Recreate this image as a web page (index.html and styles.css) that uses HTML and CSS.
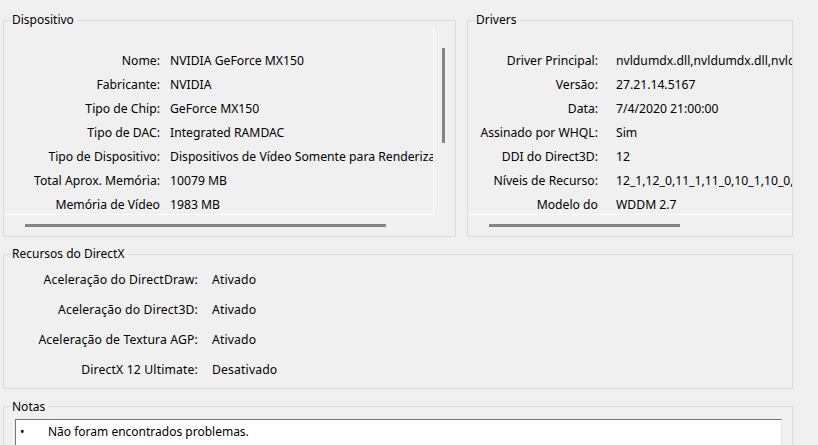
FILE: index.html
```html
<!DOCTYPE html>
<html lang="pt-BR">
<head>
<meta charset="utf-8">
<title>Ferramenta de Diagnóstico do DirectX - Exibir</title>
<link rel="stylesheet" href="styles.css">
</head>
<body>
<div class="page">
  <div class="top">
    <fieldset class="group">
      <legend>Dispositivo</legend>
      <div class="scroller">
        <div class="scroll-main">
          <div class="viewport viewport-device">
            <div class="kv kv-device">
              <span class="k">Nome:</span><span class="v">NVIDIA GeForce MX150</span>
              <span class="k">Fabricante:</span><span class="v">NVIDIA</span>
              <span class="k">Tipo de Chip:</span><span class="v">GeForce MX150</span>
              <span class="k">Tipo de DAC:</span><span class="v">Integrated RAMDAC</span>
              <span class="k">Tipo de Dispositivo:</span><span class="v">Dispositivos de Vídeo Somente para Renderização</span>
              <span class="k">Total Aprox. Memória:</span><span class="v">10079 MB</span>
              <span class="k">Memória de Vídeo</span><span class="v">1983 MB</span>
            </div>
          </div>
          <div class="vscroll"><div class="vthumb"></div></div>
        </div>
        <div class="hscroll"><div class="hthumb hthumb-device"></div></div>
      </div>
    </fieldset>

    <fieldset class="group">
      <legend>Drivers</legend>
      <div class="scroller">
        <div class="scroll-main">
          <div class="viewport viewport-drivers">
            <div class="kv kv-drivers">
              <span class="k">Driver Principal:</span><span class="v">nvldumdx.dll,nvldumdx.dll,nvldumdx.dll,nvldumdx.dll</span>
              <span class="k">Versão:</span><span class="v">27.21.14.5167</span>
              <span class="k">Data:</span><span class="v">7/4/2020 21:00:00</span>
              <span class="k">Assinado por WHQL:</span><span class="v">Sim</span>
              <span class="k">DDI do Direct3D:</span><span class="v">12</span>
              <span class="k">Níveis de Recurso:</span><span class="v">12_1,12_0,11_1,11_0,10_1,10_0,9_3,9_2,9_1</span>
              <span class="k">Modelo do</span><span class="v">WDDM 2.7</span>
            </div>
          </div>
        </div>
        <div class="hscroll"><div class="hthumb hthumb-drivers"></div></div>
      </div>
    </fieldset>
  </div>

  <fieldset class="group group-features">
    <legend>Recursos do DirectX</legend>
    <div class="kv kv-features">
      <span class="k">Aceleração do DirectDraw:</span><span class="v">Ativado</span>
      <span class="k">Aceleração do Direct3D:</span><span class="v">Ativado</span>
      <span class="k">Aceleração de Textura AGP:</span><span class="v">Ativado</span>
      <span class="k">DirectX 12 Ultimate:</span><span class="v">Desativado</span>
    </div>
  </fieldset>

  <fieldset class="group group-notes">
    <legend>Notas</legend>
    <div class="notes-box">
      <ul class="notes-list">
        <li><span class="bullet">•</span><span>Não foram encontrados problemas.</span></li>
      </ul>
    </div>
  </fieldset>
</div>
</body>
</html>
```

FILE: styles.css
```css
html, body {
  margin: 0;
  padding: 0;
  background: #f0f0f0;
  overflow: hidden;
}

body {
  font-family: "Noto Sans", "Open Sans", sans-serif;
  font-size: 12px;
  color: #000;
}

.page {
  width: 790px;
  padding: 12px 0 0 3px;
  display: flex;
  flex-direction: column;
}

.top {
  display: grid;
  grid-template-columns: 453px 326px;
  column-gap: 11px;
}

.group {
  margin: 0;
  padding: 0;
  border: 1px solid #dcdcdc;
  min-width: 0;
}

.group legend {
  margin-left: 7px;
  padding: 0 3px 0 1px;
  line-height: 16px;
  white-space: nowrap;
}

.scroller {
  display: flex;
  flex-direction: column;
}

.scroll-main {
  display: flex;
  height: 187px;
}

.viewport {
  flex: 1;
  min-width: 0;
  overflow: hidden;
  padding-top: 20px;
  border-bottom: 1px solid #fdfdfd;
}

.viewport-device {
  border-right: 1px solid #fdfdfd;
}

.vscroll {
  width: 21px;
  flex: none;
}

.vthumb {
  margin: 20px 0 0 8px;
  width: 3px;
  height: 95px;
  background: #858585;
}

.hscroll {
  height: 21px;
}

.hthumb {
  margin: 9px 0 0 21px;
  height: 3px;
  background: #858585;
}

.hthumb-device {
  width: 361px;
}

.hthumb-drivers {
  width: 191px;
}

.kv {
  display: grid;
  align-items: center;
  white-space: nowrap;
  font-size: 12.2px;
}

.kv .k {
  text-align: right;
}

.kv-device {
  grid-template-columns: 156px max-content;
  column-gap: 10px;
  grid-auto-rows: 24px;
}

.kv-drivers {
  grid-template-columns: 130px max-content;
  column-gap: 18px;
  grid-auto-rows: 24px;
}

.group-features {
  margin-top: 9px;
  padding: 2px 0 4px;
}

.kv-features {
  grid-template-columns: 194px max-content;
  column-gap: 14px;
  grid-auto-rows: 30px;
  letter-spacing: 0.15px;
}

.group-notes {
  margin-top: 9px;
  padding: 4px 10px 0 0;
}

.group-notes legend {
  padding-top: 1px;
}

.notes-box {
  margin-left: 11px;
  height: 60px;
  background: #fff;
  border-top: 1px solid #767676;
  border-left: 1px solid #767676;
  border-right: 1px solid #e3e3e3;
}

.notes-list {
  list-style: none;
  margin: 0;
  padding: 4px 0 0 4px;
}

.notes-list li {
  display: flex;
  line-height: 16px;
}

.bullet {
  width: 28px;
  flex: none;
}
```
